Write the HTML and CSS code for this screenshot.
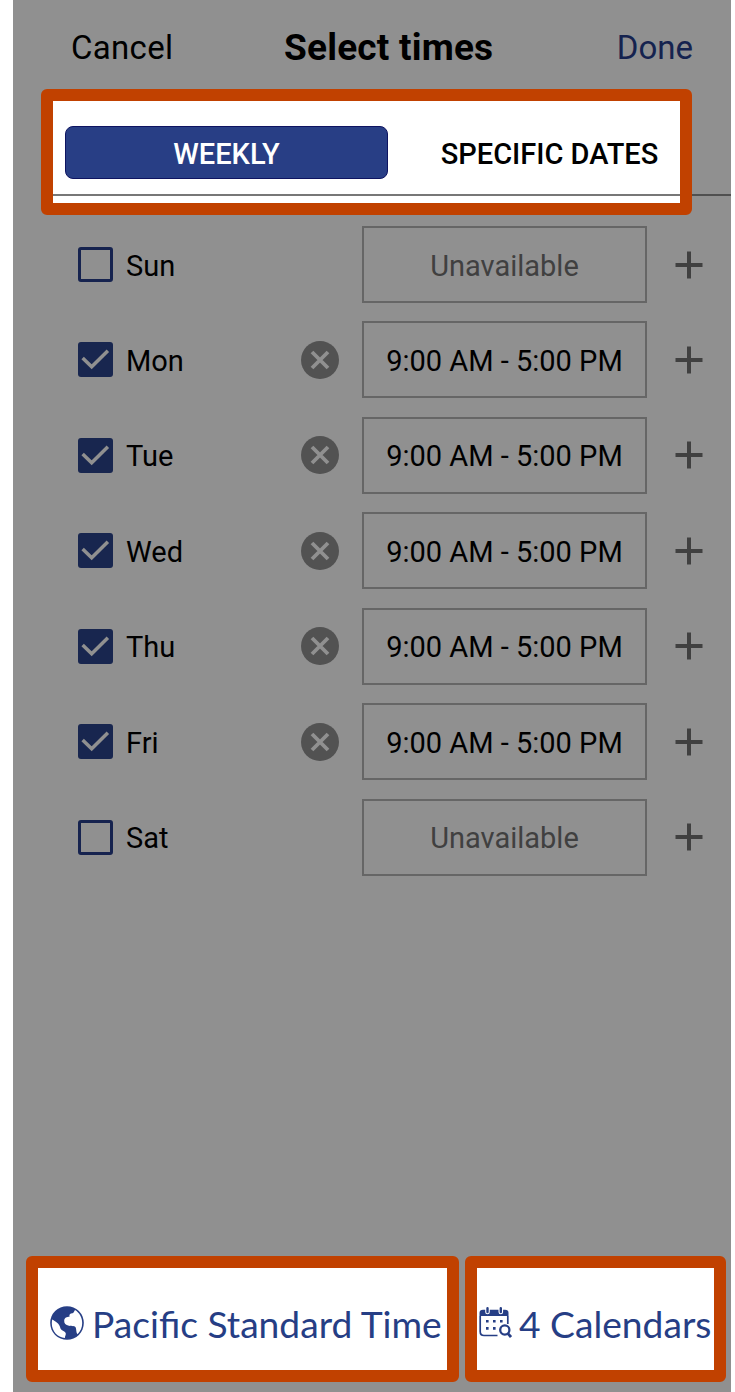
FILE: index.html
```
<!DOCTYPE html>
<html lang="en">
  <head>
    <meta charset="UTF-8" />
    <meta name="viewport" content="width=device-width, initial-scale=1.0" />
    <title>Select times</title>
    <link rel="stylesheet" href="styles.css">
  </head>
  <body>
    <!-- shared icons -->
    <svg class="icon-defs" width="0" height="0">
      <symbol id="check" viewBox="0 0 34 34">
        <path d="M4.5 15.5 L13.3 24 L29 8.5" fill="none" stroke="#909090" stroke-width="3.4" />
      </symbol>
      <symbol id="remove" viewBox="0 0 38 38">
        <circle cx="19" cy="19" r="19" fill="#525252" />
        <path d="M11 11 L27 27 M27 11 L11 27" stroke="#909090" stroke-width="3.8" />
      </symbol>
      <symbol id="plus" viewBox="0 0 28 28">
        <path d="M14 0.5 V27.5 M0.5 14 H27.5" stroke="#404040" stroke-width="4" />
      </symbol>
    </svg>

    <div class="screen">
      <header class="header">
        <span class="cancel">Cancel</span>
        <h1 class="title">Select times</h1>
        <span class="done">Done</span>
      </header>

      <div class="tabs-row">
        <div class="tabs highlight">
          <div class="tab active"><span>WEEKLY</span></div>
          <div class="tab"><span>SPECIFIC DATES</span></div>
        </div>
        <div class="tabs-side"></div>
      </div>

      <main class="days">
        <div class="day">
          <div class="checkbox"></div>
          <span class="name">Sun</span>
          <span></span>
          <div class="time empty"><span>Unavailable</span></div>
          <svg class="plus"><use href="#plus" /></svg>
        </div>
        <div class="day">
          <div class="checkbox checked"><svg><use href="#check" /></svg></div>
          <span class="name">Mon</span>
          <svg class="remove"><use href="#remove" /></svg>
          <div class="time"><span>9:00 AM - 5:00 PM</span></div>
          <svg class="plus"><use href="#plus" /></svg>
        </div>
        <div class="day">
          <div class="checkbox checked"><svg><use href="#check" /></svg></div>
          <span class="name">Tue</span>
          <svg class="remove"><use href="#remove" /></svg>
          <div class="time"><span>9:00 AM - 5:00 PM</span></div>
          <svg class="plus"><use href="#plus" /></svg>
        </div>
        <div class="day">
          <div class="checkbox checked"><svg><use href="#check" /></svg></div>
          <span class="name">Wed</span>
          <svg class="remove"><use href="#remove" /></svg>
          <div class="time"><span>9:00 AM - 5:00 PM</span></div>
          <svg class="plus"><use href="#plus" /></svg>
        </div>
        <div class="day">
          <div class="checkbox checked"><svg><use href="#check" /></svg></div>
          <span class="name">Thu</span>
          <svg class="remove"><use href="#remove" /></svg>
          <div class="time"><span>9:00 AM - 5:00 PM</span></div>
          <svg class="plus"><use href="#plus" /></svg>
        </div>
        <div class="day">
          <div class="checkbox checked"><svg><use href="#check" /></svg></div>
          <span class="name">Fri</span>
          <svg class="remove"><use href="#remove" /></svg>
          <div class="time"><span>9:00 AM - 5:00 PM</span></div>
          <svg class="plus"><use href="#plus" /></svg>
        </div>
        <div class="day">
          <div class="checkbox"></div>
          <span class="name">Sat</span>
          <span></span>
          <div class="time empty"><span>Unavailable</span></div>
          <svg class="plus"><use href="#plus" /></svg>
        </div>
      </main>

      <footer class="footer">
        <div class="timezone highlight">
          <svg class="globe" viewBox="0 0 34 34">
            <circle cx="17" cy="17" r="16.8" fill="#263e85" />
            <path d="M2.2 13.5 C4 14.5 6 15.5 8 17.5 C9.5 19 10 21 10.5 22.5 C11.5 25 15.5 25 15.8 27.5 C16 29.5 14.5 30.5 15 32 C7.5 31.5 1.8 25 1.8 17.5 C1.8 16 1.9 14.8 2.2 13.5 Z" fill="#fff" />
            <path d="M25 4 C29.5 6.7 32.2 11.5 32.2 17 C32.2 21.5 30.5 25.3 27.6 28.2 C26 27 26.5 24 25.8 21.8 C25 19.5 22 20.5 19 19.8 C15.5 19 14 17.5 14.2 14.5 C14.4 11.5 17 11 19.5 10.8 C19 8.5 20 7.5 22.5 7.3 C24 7 24 5.3 25 4 Z" fill="#fff" />
          </svg>
          <span>Pacific Standard Time</span>
        </div>
        <div class="calendars highlight">
          <svg class="calendar" viewBox="0 0 33 32" fill="none" stroke="#263e85">
            <path d="M1.2 9 V24.5 Q1.2 28.5 5 28.5 H18.5 M28.8 9 V17" stroke-width="1.7" />
            <path d="M0.5 9 V6 Q0.5 2.8 4 2.8 H26 Q29.5 2.8 29.5 6 V9 Z" fill="#263e85" stroke="none" />
            <path d="M8.5 0.5 V5 M21.8 0.5 V5" stroke="#fff" stroke-width="4.6" stroke-linecap="round" />
            <path d="M8.5 1.2 V5 M21.8 1.2 V5" stroke-width="2.4" stroke-linecap="round" />
            <path d="M7 14.2 H9.6 M14 14.2 H16.6 M21 14.2 H23.6 M7 21.4 H9.6 M14 21.4 H16.6" stroke-width="2.6" />
            <circle cx="25.8" cy="23" r="4.6" stroke-width="2.3" />
            <path d="M28.8 26.3 L32 30" stroke-width="2.8" />
          </svg>
          <span>4 Calendars</span>
        </div>
      </footer>
    </div>
  </body>
</html>
```
FILE: styles.css
```
* {
  box-sizing: border-box;
}

body {
  margin: 0;
  background-color: #fff;
  font-family: Roboto, "Liberation Sans", sans-serif;
  color: #000;
}

.icon-defs {
  display: block;
}

.screen {
  display: flex;
  flex-direction: column;
  width: 718px;
  height: 1392px;
  margin-left: 13px;
  background-color: #909090;
}

.highlight {
  background-color: #fff;
  border: 12px solid #c14100;
  border-radius: 6px;
}

/* header */
.header {
  display: grid;
  grid-template-columns: 213px 1fr auto;
  align-items: center;
  height: 89px;
  padding: 5px 38px 0 58px;
  font-size: 33px;
}

.cancel {
  letter-spacing: 0.3px;
}

.title {
  margin: 0;
  font-size: 37px;
  font-weight: 700;
  letter-spacing: 0.2px;
}

.done {
  color: #15234f;
}

/* tabs */
.tabs-row {
  display: flex;
  height: 126px;
  padding-left: 28px;
}

.tabs {
  display: flex;
  width: 651px;
  padding: 25px 12px 0;
  background-image: linear-gradient(#777, #777);
  background-repeat: no-repeat;
  background-position: 0 93px;
  background-size: 100% 2px;
}

.tab {
  display: flex;
  flex-shrink: 0;
  justify-content: center;
  align-items: center;
  width: 323px;
  height: 53px;
  padding-top: 2px;
  font-size: 29px;
  font-weight: 500;
  white-space: nowrap;
}

.tab.active {
  color: #fff;
  background-color: #283e85;
  border: 1px solid #0e1461;
  border-radius: 8px;
}

.tabs-side {
  flex: 1;
  height: 107px;
  border-bottom: 2px solid #505050;
}

/* days */
.days {
  display: flex;
  flex-direction: column;
  gap: 18.45px;
  padding: 11px 0 0 65px;
}

.day {
  display: grid;
  grid-template-columns: 48px 175px 61px 285px 1fr;
  align-items: center;
  height: 77px;
  font-size: 29px;
}

.name {
  padding-top: 2px;
}

.checkbox {
  width: 35px;
  height: 35px;
  border: 3px solid #16234f;
  border-radius: 3px;
}

.checkbox.checked {
  border: none;
  background-color: #18264f;
}

.checkbox svg {
  display: block;
  width: 35px;
  height: 35px;
}

.remove {
  width: 38px;
  height: 38px;
}

.time {
  display: flex;
  justify-content: center;
  align-items: center;
  height: 77px;
  padding-top: 2px;
  border: 2px solid #666;
}

.time.empty {
  color: #404040;
}

.plus {
  width: 28px;
  height: 28px;
  margin-left: 28px;
}

/* footer */
.footer {
  display: flex;
  gap: 6px;
  height: 136px;
  margin-top: auto;
  padding: 0 5px 10px 13px;
  font-family: Lato, sans-serif;
  font-size: 37.2px;
  color: #263e85;
  white-space: nowrap;
}

.timezone,
.calendars {
  display: flex;
  align-items: center;
  padding-top: 8px;
}

.timezone {
  width: 433px;
  padding-left: 12px;
}

.calendars {
  width: 261px;
  padding-left: 2px;
}

.globe {
  flex-shrink: 0;
  width: 34px;
  height: 34px;
  margin-right: 8px;
}

.calendar {
  flex-shrink: 0;
  width: 33px;
  height: 32px;
  margin-right: 7px;
}
```
